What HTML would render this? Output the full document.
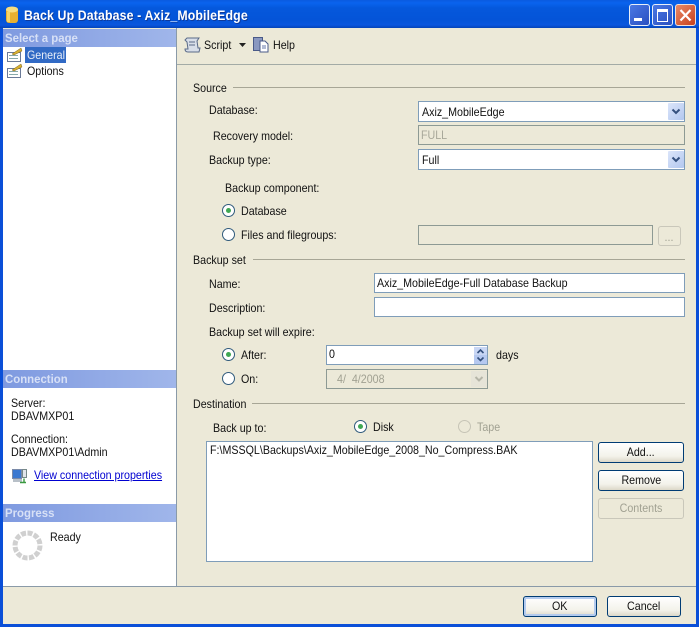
<!DOCTYPE html>
<html><head><meta charset="utf-8">
<style>
html,body{margin:0;padding:0;width:699px;height:627px;overflow:hidden;background:#ece9d8}
body{position:relative;font:12px/14px "Liberation Sans",sans-serif;color:#111}
.a{position:absolute}
.t{position:absolute;white-space:nowrap;line-height:14px;font-size:12px;transform-origin:0 0;transform:scaleX(.89)}
.box{position:absolute;box-sizing:border-box;border:1px solid #7f9db9;background:#fff}
.dis{background:#ece9d8;border-color:#8d9a94}
.hd{position:absolute;left:3px;width:173px;height:18px;background:linear-gradient(90deg,#7f9ae0,#a0b6ea)}
.hd span{position:absolute;left:2px;top:2px;color:#d7e0f6;font-weight:bold;font-size:12px;line-height:14px;white-space:nowrap;transform-origin:0 0;transform:scaleX(.95)}
.dd{position:absolute;width:16px;height:17px;background:linear-gradient(135deg,#dbe5fa,#b2c7ef);border-radius:1px}
.dd svg{display:block}
.ln{position:absolute;height:1px;background:#a7a696}
.rad{position:absolute;width:13px;height:13px;box-sizing:border-box;border:1px solid #2f5a7c;border-radius:50%;background:#fff}
.rad.on:after{content:"";position:absolute;left:3px;top:3px;width:5px;height:5px;border-radius:50%;background:#3fa753}
.btn{position:absolute;box-sizing:border-box;border:1px solid #003c74;border-radius:3px;background:linear-gradient(#fff,#f3f2ea 70%,#dcd8c8);text-align:center;line-height:19px;font-size:12px}
.btn span{display:inline-block;transform:scaleX(.89)}
.btn.d{border-color:#c9c7ba;color:#a1a192;background:#ece9d8}
</style></head><body>
<!-- title bar -->
<div class="a" style="left:0;top:0;width:699px;height:28px;background:linear-gradient(#0a5be0 0,#0a63ee 3px,#0558dc 8px,#0454d8 20px,#0a56de 25px,#0544b8 28px)"></div>
<svg class="a" style="left:5px;top:5px" width="14" height="19"><rect x="1" y="2" width="12" height="16" rx="3" fill="#e8b030"/><ellipse cx="7" cy="4.500" rx="6" ry="3" fill="#f6dd80"/><rect x="2" y="7" width="3" height="10" fill="#f6d468"/></svg>
<div class="t" style="left:24px;top:7px;color:#fff;font-weight:bold;font-size:14px;line-height:16px;letter-spacing:.15px;text-shadow:1px 1px #0f3a9a;transform:scaleX(.88)">Back Up Database - Axiz_MobileEdge</div>
<!-- window buttons -->
<div class="a" style="left:629px;top:4px;width:21px;height:22px;box-sizing:border-box;border:1px solid #e8eef8;border-radius:3px;background:linear-gradient(135deg,#4a78e4,#2a4fc0)"><div class="a" style="left:4px;top:13px;width:8px;height:3px;background:#fff"></div></div>
<div class="a" style="left:652px;top:4px;width:21px;height:22px;box-sizing:border-box;border:1px solid #e8eef8;border-radius:3px;background:linear-gradient(135deg,#4a78e4,#2a4fc0)"><div class="a" style="left:4px;top:4px;width:11px;height:13px;box-sizing:border-box;border:1px solid #fff;border-top:3px solid #fff"></div></div>
<div class="a" style="left:675px;top:4px;width:21px;height:22px;box-sizing:border-box;border:1px solid #f0e0d8;border-radius:3px;background:linear-gradient(135deg,#e88a68,#c8401c)"><svg class="a" style="left:3px;top:3px" width="13" height="14"><path d="M1.500 2L11.500 12.500M11.500 2L1.500 12.500" stroke="#fff" stroke-width="2.2"/></svg></div>
<!-- window frame -->
<div class="a" style="left:0;top:28px;width:3px;height:599px;background:#0a4fd8"></div>
<div class="a" style="left:696px;top:28px;width:3px;height:599px;background:#0a4fd8"></div>
<div class="a" style="left:0;top:624px;width:699px;height:3px;background:#0a4fd8"></div>
<!-- left panel -->
<div class="a" style="left:3px;top:29px;width:173px;height:557px;background:#fff"></div>
<div class="a" style="left:176px;top:28px;width:1px;height:558px;background:#8a9aa8"></div>
<div class="hd" style="top:29px"><span>Select a page</span></div>
<div class="a" style="left:25px;top:47px;width:41px;height:16px;background:#316ac5"></div>
<div class="t" style="left:27px;top:48px;color:#e8eef8">General</div>
<div class="t" style="left:27px;top:64px">Options</div>
<svg class="a" style="left:6px;top:47px" width="17" height="15"><rect x="1.500" y="5.500" width="13" height="9" fill="#fff" stroke="#6a7a98"/><path d="M3 8.500h9M3 11.500h9" stroke="#8aa"/><path d="M6 7L15 1l1 3-8 4z" fill="#d8b030" stroke="#7a6020" stroke-width=".5"/></svg>
<svg class="a" style="left:6px;top:63px" width="17" height="15"><rect x="1.500" y="5.500" width="13" height="9" fill="#fff" stroke="#6a7a98"/><path d="M3 8.500h9M3 11.500h9" stroke="#8aa"/><path d="M6 7L15 1l1 3-8 4z" fill="#d8b030" stroke="#7a6020" stroke-width=".5"/></svg>
<div class="hd" style="top:370px"><span>Connection</span></div>
<div class="t" style="left:11px;top:396px">Server:</div>
<div class="t" style="left:11px;top:409px">DBAVMXP01</div>
<div class="t" style="left:11px;top:432px">Connection:</div>
<div class="t" style="left:11px;top:445px">DBAVMXP01\Admin</div>
<svg class="a" style="left:11px;top:467px" width="17" height="17"><rect x="1.500" y="2.500" width="9" height="9" fill="#3a78d0" stroke="#7a8aa8"/><rect x="2" y="12" width="9" height="3" fill="#b8c0c8"/><rect x="11.500" y="2.500" width="4" height="8" fill="#e0e4ea" stroke="#788"/><path d="M9 15.500h6M13 15.500v-4" stroke="#3a9a40" stroke-width="1.400" fill="none"/></svg>
<div class="t" style="left:34px;top:468px;color:#0000d0;text-decoration:underline">View connection properties</div>
<div class="hd" style="top:504px"><span>Progress</span></div>
<div class="t" style="left:50px;top:530px">Ready</div>
<svg class="a" style="left:12px;top:530px" width="31" height="31"><circle cx="15.500" cy="15.500" r="12.500" fill="none" stroke="#d0d0d0" stroke-width="5" stroke-dasharray="5 1.500"/></svg>
<!-- toolbar -->
<div class="a" style="left:177px;top:64px;width:519px;height:1px;background:#a3aba6"></div>
<svg class="a" style="left:184px;top:36px" width="18" height="18"><path d="M3 2h12l-2 3 1 7H16l-1 4H4c-2 0-3-1-3-3h3L3 6 1 4z" fill="#d8dee8" stroke="#5a6a88"/><path d="M5 6h6M5 9h6" stroke="#5a6a88"/></svg>
<div class="t" style="left:204px;top:38px">Script</div>
<svg class="a" style="left:239px;top:43px" width="7" height="4"><path d="M0 0h7L3.500 4z" fill="#222"/></svg>
<svg class="a" style="left:252px;top:36px" width="18" height="18"><rect x="1.500" y="1.500" width="9" height="13" fill="#8a98c0" stroke="#4a5a88"/><path d="M8 5h5l3 3v8H8z" fill="#fff" stroke="#4a5a88"/><path d="M10 10h4M10 12h4" stroke="#67a"/></svg>
<div class="t" style="left:273px;top:38px">Help</div>
<!-- Source -->
<div class="t" style="left:193px;top:81px">Source</div>
<div class="ln" style="left:233px;top:87px;width:452px"></div>
<div class="t" style="left:209px;top:103px">Database:</div>
<div class="box" style="left:418px;top:101px;width:267px;height:21px"></div>
<div class="t" style="left:422px;top:105px">Axiz_MobileEdge</div>
<div class="dd" style="left:668px;top:103px"><svg width="16" height="17"><path d="M4.500 6.500L8 10l3.500-3.500" stroke="#34507e" stroke-width="2" fill="none"/></svg></div>
<div class="t" style="left:213px;top:129px">Recovery model:</div>
<div class="box dis" style="left:418px;top:125px;width:267px;height:20px"></div>
<div class="t" style="left:421px;top:128px;color:#a8a89a">FULL</div>
<div class="t" style="left:209px;top:153px">Backup type:</div>
<div class="box" style="left:418px;top:149px;width:267px;height:21px"></div>
<div class="t" style="left:422px;top:153px">Full</div>
<div class="dd" style="left:668px;top:151px"><svg width="16" height="17"><path d="M4.500 6.500L8 10l3.500-3.500" stroke="#34507e" stroke-width="2" fill="none"/></svg></div>
<div class="t" style="left:225px;top:181px">Backup component:</div>
<div class="rad on" style="left:222px;top:204px"></div>
<div class="t" style="left:241px;top:204px">Database</div>
<div class="rad" style="left:222px;top:228px"></div>
<div class="t" style="left:241px;top:228px">Files and filegroups:</div>
<div class="box dis" style="left:418px;top:225px;width:235px;height:20px"></div>
<div class="btn d" style="left:658px;top:226px;width:23px;height:20px;line-height:20px"><span>...</span></div>
<!-- Backup set -->
<div class="t" style="left:193px;top:253px">Backup set</div>
<div class="ln" style="left:253px;top:259px;width:432px"></div>
<div class="t" style="left:209px;top:277px">Name:</div>
<div class="box" style="left:374px;top:273px;width:311px;height:20px"></div>
<div class="t" style="left:377px;top:276px">Axiz_MobileEdge-Full Database Backup</div>
<div class="t" style="left:209px;top:301px">Description:</div>
<div class="box" style="left:374px;top:297px;width:311px;height:20px"></div>
<div class="t" style="left:209px;top:325px">Backup set will expire:</div>
<div class="rad on" style="left:222px;top:348px"></div>
<div class="t" style="left:241px;top:348px">After:</div>
<div class="box" style="left:326px;top:345px;width:162px;height:20px"></div>
<div class="t" style="left:329px;top:347px">0</div>
<div class="a" style="left:474px;top:347px;width:13px;height:8px;background:#c8d6f4"><svg width="13" height="8" style="display:block"><path d="M3.500 6L6.500 3l3 3" stroke="#34507e" stroke-width="1.600" fill="none"/></svg></div>
<div class="a" style="left:474px;top:355px;width:13px;height:9px;background:#b6c9f0"><svg width="13" height="9" style="display:block"><path d="M3.500 2.500l3 3 3-3" stroke="#34507e" stroke-width="1.600" fill="none"/></svg></div>
<div class="t" style="left:496px;top:348px">days</div>
<div class="rad" style="left:222px;top:372px"></div>
<div class="t" style="left:241px;top:372px">On:</div>
<div class="box dis" style="left:326px;top:369px;width:162px;height:20px"></div>
<div class="t" style="left:337px;top:372px;color:#a1a192">4/&nbsp; 4/2008</div>
<div class="a" style="left:471px;top:371px;width:16px;height:16px;background:#e6e4d8"><svg width="16" height="16" style="display:block"><path d="M4.500 6L8 9.500 11.500 6" stroke="#b5b5a8" stroke-width="2" fill="none"/></svg></div>
<!-- Destination -->
<div class="t" style="left:193px;top:397px">Destination</div>
<div class="ln" style="left:252px;top:403px;width:433px"></div>
<div class="t" style="left:213px;top:421px">Back up to:</div>
<div class="rad on" style="left:354px;top:420px"></div>
<div class="t" style="left:373px;top:420px">Disk</div>
<div class="rad" style="left:458px;top:420px;border-color:#c6c4b6;background:#ece9d8"></div>
<div class="t" style="left:477px;top:420px;color:#a1a192">Tape</div>
<div class="box" style="left:206px;top:441px;width:387px;height:121px"></div>
<div class="t" style="left:210px;top:443px">F:\MSSQL\Backups\Axiz_MobileEdge_2008_No_Compress.BAK</div>
<div class="btn" style="left:598px;top:442px;width:86px;height:21px"><span>Add...</span></div>
<div class="btn" style="left:598px;top:470px;width:86px;height:21px"><span>Remove</span></div>
<div class="btn d" style="left:598px;top:498px;width:86px;height:21px"><span>Contents</span></div>
<!-- bottom -->
<div class="a" style="left:3px;top:586px;width:693px;height:1px;background:#8a9aa8"></div>
<div class="btn" style="left:523px;top:596px;width:74px;height:21px;box-shadow:inset 0 0 0 2px #b4cbee"><span>OK</span></div>
<div class="btn" style="left:607px;top:596px;width:74px;height:21px"><span>Cancel</span></div>
</body></html>
